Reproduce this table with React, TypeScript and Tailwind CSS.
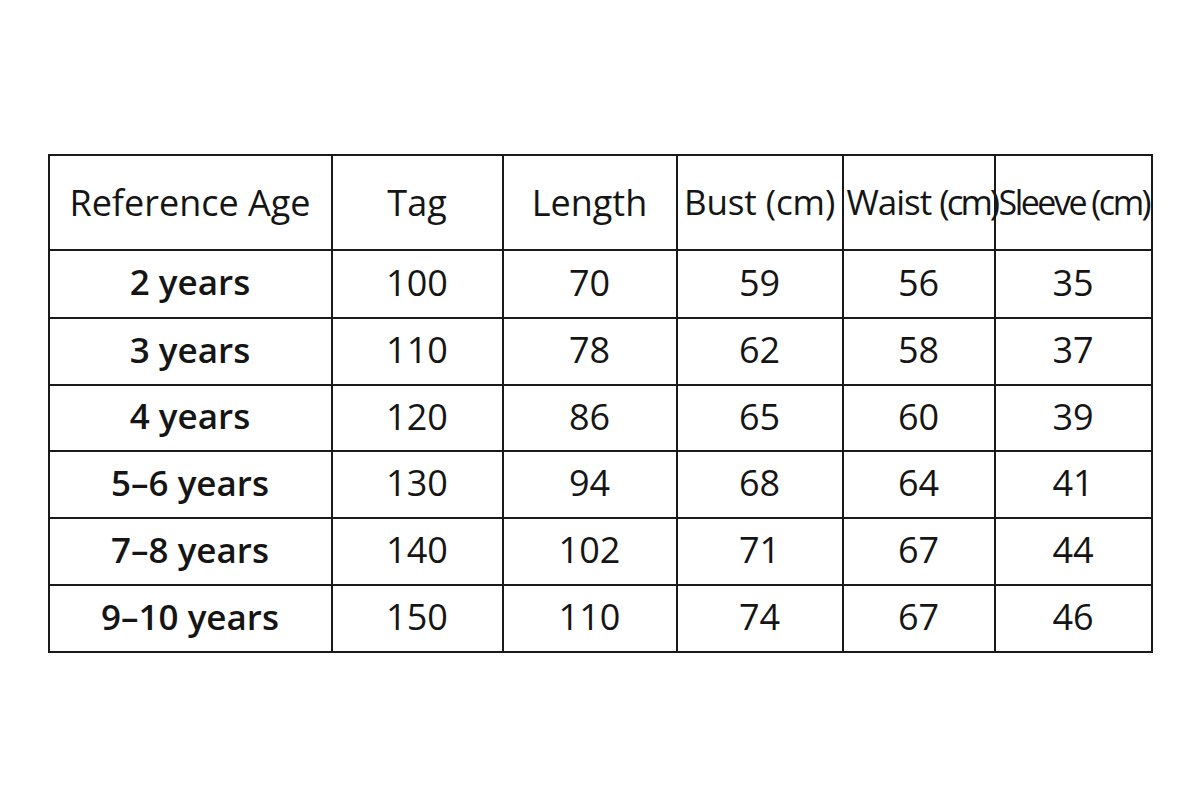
import React from "react";

const rows = [
  ["2 years", "100", "70", "59", "56", "35"],
  ["3 years", "110", "78", "62", "58", "37"],
  ["4 years", "120", "86", "65", "60", "39"],
  ["5–6 years", "130", "94", "68", "64", "41"],
  ["7–8 years", "140", "102", "71", "67", "44"],
  ["9–10 years", "150", "110", "74", "67", "46"],
];

const widths = [283, 171, 174, 166, 152, 157];
const rowHeights = [68, 67, 66, 67, 67, 67];

export default function App() {
  return (
    <div className="w-[1200px] h-[800px] bg-white pt-[154px] flex justify-center" style={{ fontFamily: '"Open Sans", "Noto Sans", sans-serif' }}>
      <table className="border-collapse table-fixed w-[1104px] h-fit text-[#151515] border-2 border-[#1a1a1a]">
        <colgroup>
          {widths.map((w, i) => (
            <col key={i} style={{ width: w }} />
          ))}
        </colgroup>
        <thead>
          <tr className="h-[95px]">
            <th className="border-2 border-[#1a1a1a] font-normal text-[36px] text-center p-0 whitespace-nowrap">Reference Age</th>
            <th className="border-2 border-[#1a1a1a] font-normal text-[36px] text-center p-0">Tag</th>
            <th className="border-2 border-[#1a1a1a] font-normal text-[36px] text-center p-0">Length</th>
            <th className="border-2 border-[#1a1a1a] font-normal text-[35px] text-center p-0 whitespace-nowrap tracking-[-0.1px]">Bust (cm)</th>
            <th className="border-2 border-[#1a1a1a] font-normal text-[35px] text-left pl-[3px] pr-0 whitespace-nowrap overflow-visible tracking-[-1px]">Waist <span className="tracking-[-3px]">(cm)</span></th>
            <th className="border-2 border-[#1a1a1a] font-normal text-[34px] text-left pl-[3px] pr-0 whitespace-nowrap tracking-[-2.5px]">Sleeve (cm)</th>
          </tr>
        </thead>
        <tbody>
          {rows.map((r, ri) => (
            <tr key={ri} style={{ height: rowHeights[ri] }}>
              {r.map((c, ci) => (
                <td
                  key={ci}
                  className={
                    ci === 0
                      ? "border-2 border-[#1a1a1a] text-center text-[35px] font-semibold p-0 pb-[3px] whitespace-nowrap"
                      : "border-2 border-[#1a1a1a] text-center text-[36px] font-normal p-0 pb-[3px]"
                  }
                >
                  {c}
                </td>
              ))}
            </tr>
          ))}
        </tbody>
      </table>
    </div>
  );
}
